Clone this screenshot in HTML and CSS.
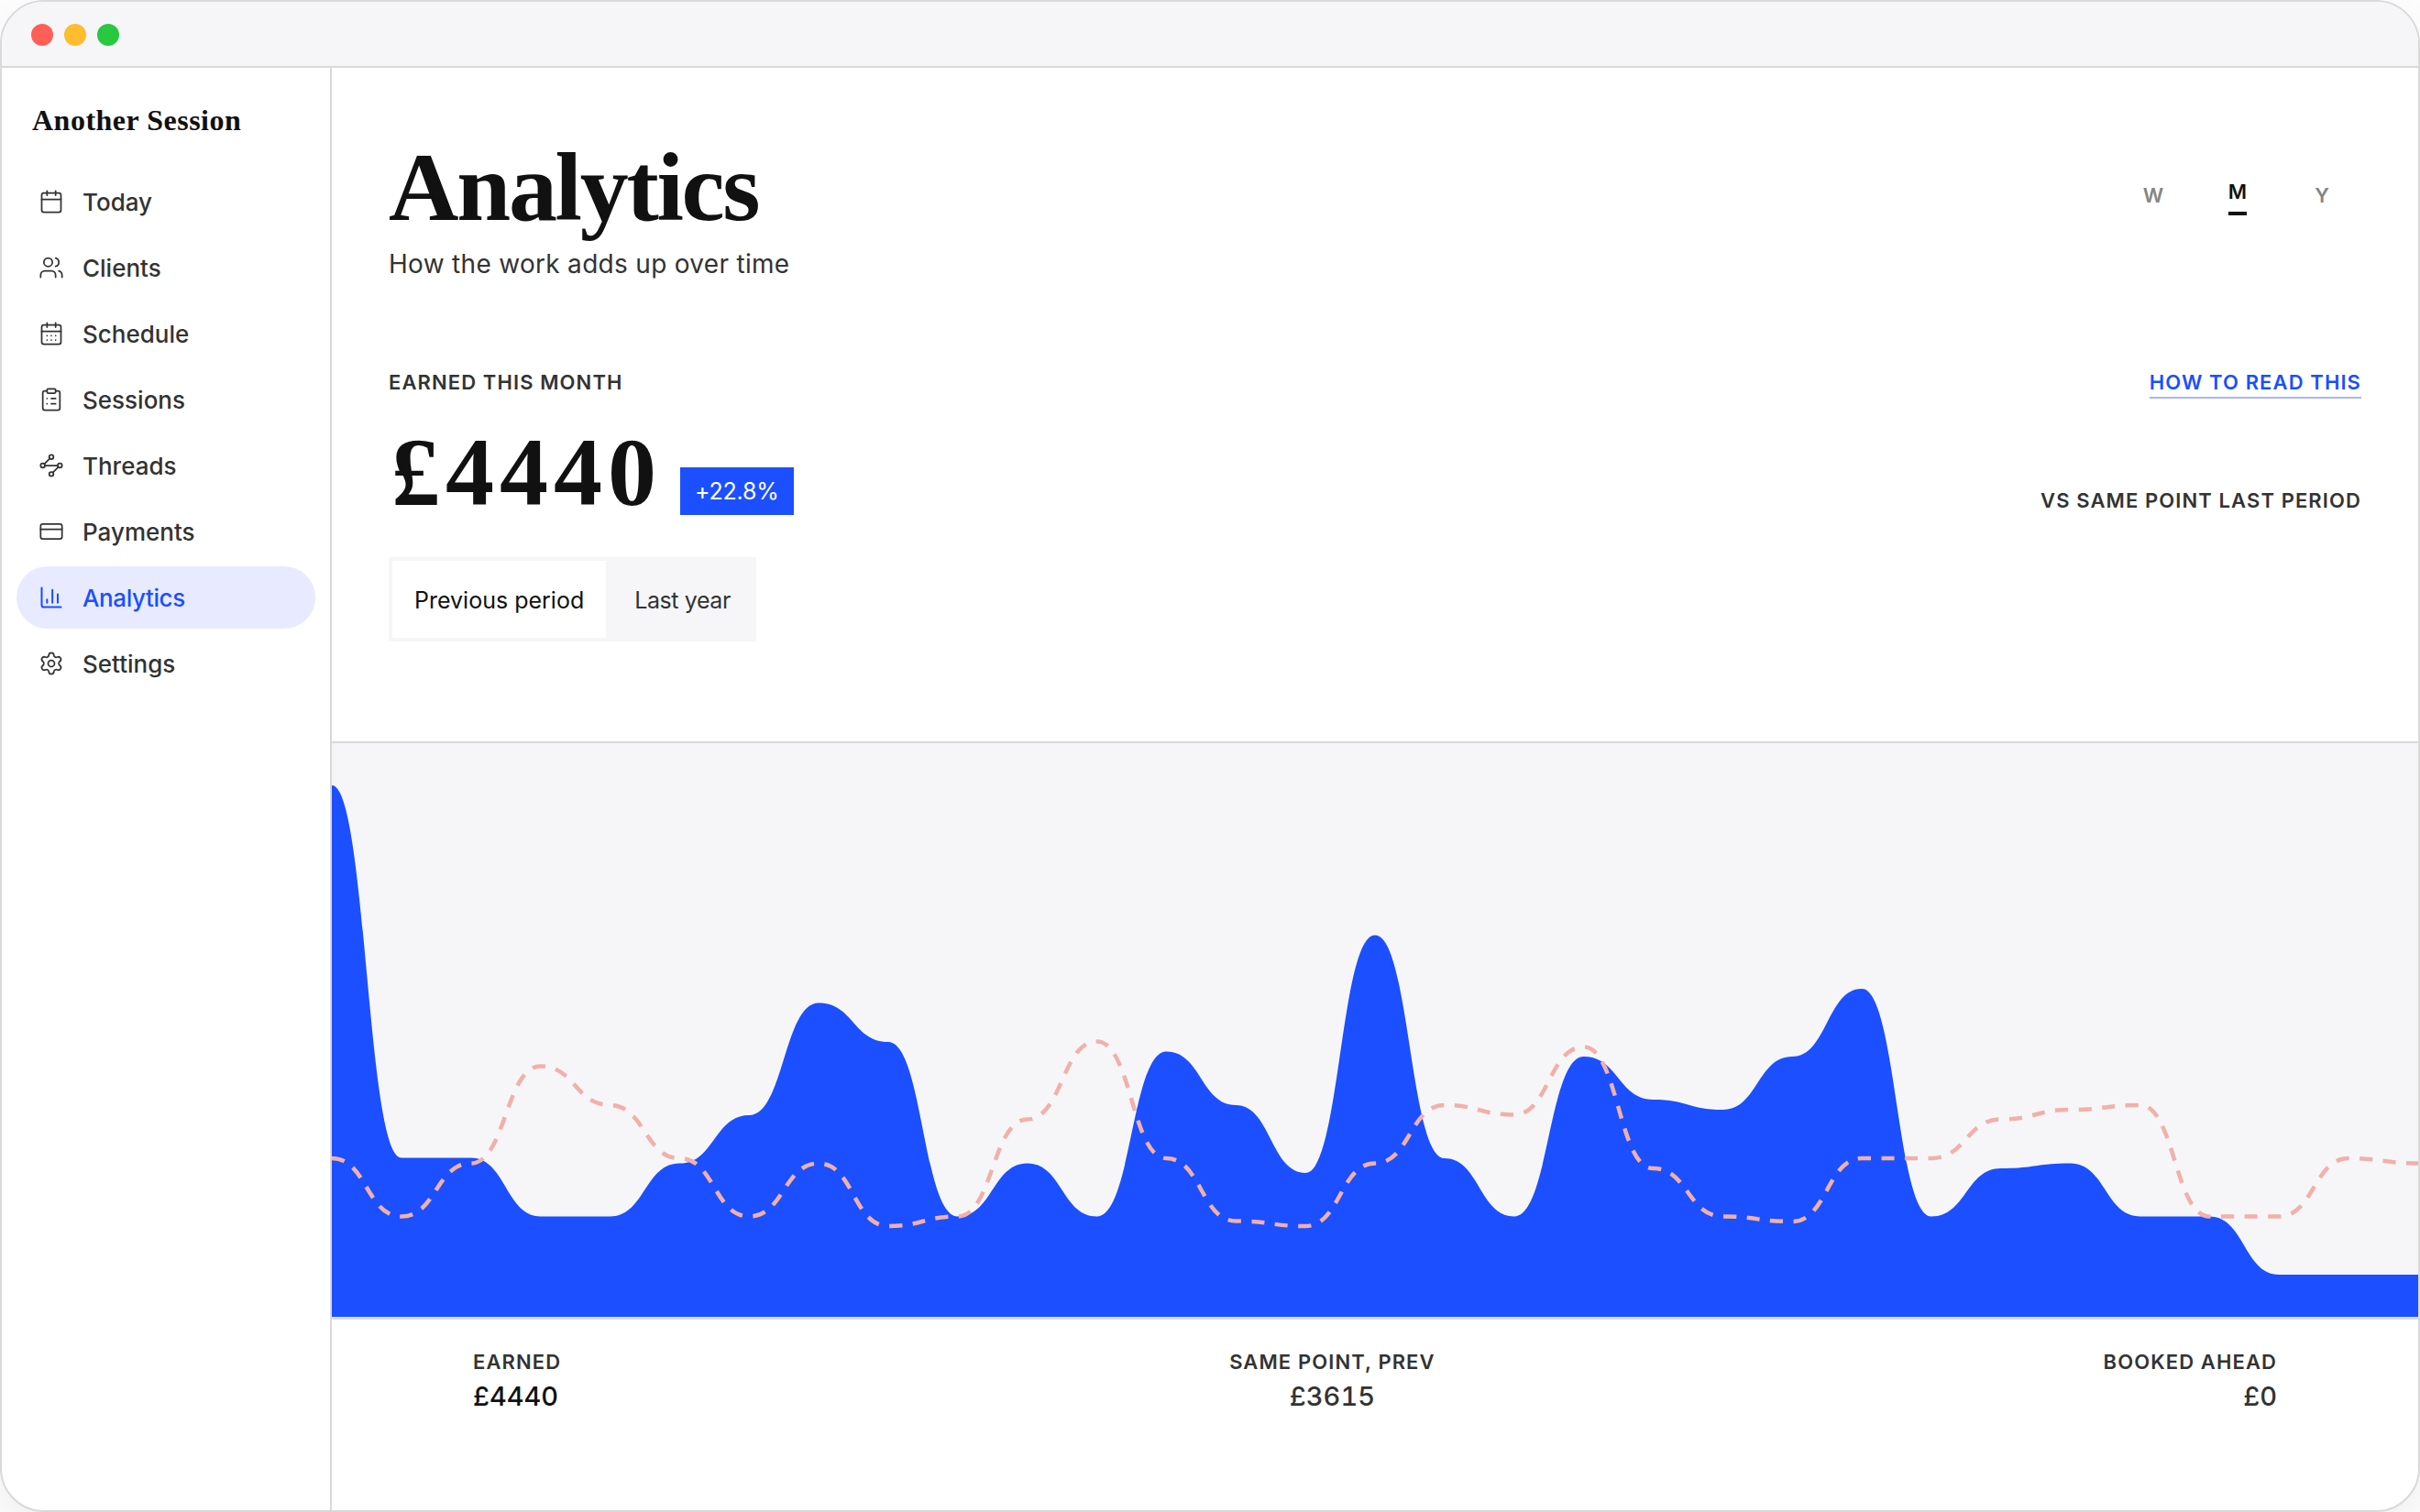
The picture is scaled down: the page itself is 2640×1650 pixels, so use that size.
FILE: index.html
```html
<!DOCTYPE html>
<html lang="en">
<head>
  <meta charset="UTF-8">
  <meta name="viewport" content="width=device-width, initial-scale=1.0">
  <title>Another Session - Analytics</title>
  <link rel="stylesheet" href="styles.css">
</head>
<body>
  <div class="window">
    <div class="titlebar">
      <span class="dot red"></span>
      <span class="dot yellow"></span>
      <span class="dot green"></span>
    </div>

    <div class="app">
      <aside class="sidebar">
        <div class="brand">Another Session</div>
        <nav class="nav">
          <a class="nav-item">
            <svg class="icon" viewBox="0 0 24 24"><path d="M8 2v4M16 2v4M3 10h18"/><rect x="3" y="4" width="18" height="18" rx="2"/></svg>
            <span>Today</span>
          </a>
          <a class="nav-item">
            <svg class="icon" viewBox="0 0 24 24"><path d="M16 21v-2a4 4 0 0 0-4-4H6a4 4 0 0 0-4 4v2"/><circle cx="9" cy="7" r="4"/><path d="M22 21v-2a4 4 0 0 0-3-3.87M16 3.13a4 4 0 0 1 0 7.75"/></svg>
            <span>Clients</span>
          </a>
          <a class="nav-item">
            <svg class="icon" viewBox="0 0 24 24"><path d="M8 2v4M16 2v4M3 10h18"/><rect x="3" y="4" width="18" height="18" rx="2"/><path d="M8 14h.01M12 14h.01M16 14h.01M8 18h.01M12 18h.01M16 18h.01"/></svg>
            <span>Schedule</span>
          </a>
          <a class="nav-item">
            <svg class="icon" viewBox="0 0 24 24"><rect x="8" y="2" width="8" height="4" rx="1"/><path d="M16 4h2a2 2 0 0 1 2 2v14a2 2 0 0 1-2 2H6a2 2 0 0 1-2-2V6a2 2 0 0 1 2-2h2M12 11h4M12 16h4M8 11h.01M8 16h.01"/></svg>
            <span>Sessions</span>
          </a>
          <a class="nav-item">
            <svg class="icon" viewBox="0 0 24 24"><path d="m10.586 5.414-5.172 5.172M18.586 13.414l-5.172 5.172M6 12h12"/><circle cx="12" cy="20" r="2"/><circle cx="12" cy="4" r="2"/><circle cx="20" cy="12" r="2"/><circle cx="4" cy="12" r="2"/></svg>
            <span>Threads</span>
          </a>
          <a class="nav-item">
            <svg class="icon" viewBox="0 0 24 24"><rect x="2" y="5" width="20" height="14" rx="2"/><path d="M2 10h20"/></svg>
            <span>Payments</span>
          </a>
          <a class="nav-item active">
            <svg class="icon" viewBox="0 0 24 24"><path d="M3 3v16a2 2 0 0 0 2 2h16M18 17V9M13 17V5M8 17v-3"/></svg>
            <span>Analytics</span>
          </a>
          <a class="nav-item">
            <svg class="icon" viewBox="0 0 24 24"><path d="M9.671 4.136a2.34 2.34 0 0 1 4.659 0 2.34 2.34 0 0 0 3.319 1.915 2.34 2.34 0 0 1 2.33 4.033 2.34 2.34 0 0 0 0 3.831 2.34 2.34 0 0 1-2.33 4.033 2.34 2.34 0 0 0-3.319 1.915 2.34 2.34 0 0 1-4.659 0 2.34 2.34 0 0 0-3.32-1.915 2.34 2.34 0 0 1-2.33-4.033 2.34 2.34 0 0 0 0-3.831A2.34 2.34 0 0 1 6.35 6.051a2.34 2.34 0 0 0 3.319-1.915"/><circle cx="12" cy="12" r="3"/></svg>
            <span>Settings</span>
          </a>
        </nav>
      </aside>

      <main class="main">
        <section class="hero">
          <header class="page-header">
            <div>
              <h1>Analytics</h1>
              <p class="subtitle">How the work adds up over time</p>
            </div>
            <div class="range">
              <button>W</button>
              <button class="active"><span>M</span></button>
              <button>Y</button>
            </div>
          </header>

          <div class="row label-row">
            <span class="label">Earned this month</span>
            <a class="label help">How to read this</a>
          </div>

          <div class="row amount-row">
            <div class="amount">
              <span class="figure">£4440</span>
              <span class="badge">+22.8%</span>
            </div>
            <span class="label versus">vs same point last period</span>
          </div>

          <div class="toggle">
            <button class="active">Previous period</button>
            <button>Last year</button>
          </div>
        </section>

        <section class="chart">
          <svg width="2276" height="626" viewBox="0 0 2276 626">
            <path class="area" id="area"/>
            <path class="previous" id="previous"/>
          </svg>
        </section>

        <section class="totals">
          <div class="total">
            <span class="label">Earned</span>
            <span class="value strong">£4440</span>
          </div>
          <div class="total center">
            <span class="label">Same point, prev</span>
            <span class="value">£3615</span>
          </div>
          <div class="total right">
            <span class="label">Booked ahead</span>
            <span class="value">£0</span>
          </div>
        </section>
      </main>
    </div>
  </div>
  <script src="chart.js"></script>
</body>
</html>
```
FILE: styles.css
```css
* {
  box-sizing: border-box;
}

body {
  margin: 0;
  background: #fdfdfd;
  color: #333333;
  font-family: Inter, "Liberation Sans", sans-serif;
}

button {
  padding: 0;
  border: none;
  background: none;
  font: inherit;
  color: inherit;
}

.window {
  display: flex;
  flex-direction: column;
  width: 2640px;
  height: 1650px;
  border: 2px solid #d9d9d9;
  border-radius: 48px;
  background: #ffffff;
  box-shadow: 0 16px 40px rgba(0, 0, 0, 0.06);
  overflow: hidden;
}

.titlebar {
  display: flex;
  align-items: center;
  gap: 12px;
  height: 72px;
  padding: 2px 0 0 32px;
  background: #f6f6f9;
  border-bottom: 2px solid #d9d9d9;
}

.dot {
  width: 24px;
  height: 24px;
  border-radius: 50%;
}

.red { background: #ff5f57; }
.yellow { background: #febc2e; }
.green { background: #28c840; }

.app {
  display: flex;
  flex: 1;
}

/* Sidebar */
.sidebar {
  width: 360px;
  padding: 37px 16px 0;
  border-right: 2px solid #d9d9d9;
}

.brand {
  height: 75px;
  padding-left: 17px;
  font: bold 32px/40px "Liberation Serif", serif;
  letter-spacing: 0.5px;
  color: #111111;
}

.nav {
  display: flex;
  flex-direction: column;
  gap: 4px;
}

.nav-item {
  display: flex;
  align-items: center;
  gap: 20px;
  height: 68px;
  padding-left: 24px;
  border-radius: 34px;
  font-size: 26px;
  font-weight: 500;
}

.nav-item.active {
  background: #e8eaff;
  color: #1b4fff;
  letter-spacing: -0.4px;
}

.icon {
  width: 28px;
  height: 28px;
  fill: none;
  stroke: currentColor;
  stroke-width: 1.5;
  stroke-linecap: round;
  stroke-linejoin: round;
}

.active .icon {
  stroke-width: 1.75;
}

/* Main column */
.main {
  flex: 1;
}

.hero {
  height: 735px;
  padding: 78px 62px 0;
}

.page-header,
.row {
  display: flex;
  justify-content: space-between;
}

h1 {
  margin: 0;
  font: bold 106px/106px "Liberation Serif", serif;
  letter-spacing: -2.3px;
  color: #111111;
}

.subtitle {
  margin: 10px 0 0;
  font-size: 28px;
  line-height: 40px;
  letter-spacing: 0.3px;
}

.range {
  display: flex;
  height: 122px;
  margin-right: -3px;
  font-size: 22px;
  font-weight: 600;
  color: #858585;
}

.range button {
  width: 92px;
  line-height: 28px;
}

.range .active {
  color: #111111;
}

.range .active span {
  display: inline-block;
  margin-top: 4px;
  padding-bottom: 8px;
  border-bottom: 4px solid #111111;
}

.label {
  font-size: 22px;
  font-weight: 600;
  line-height: 28px;
  letter-spacing: 1.1px;
  text-transform: uppercase;
}

.label-row {
  margin-top: 95px;
}

.help {
  height: 32px;
  color: #1b4fff;
  border-bottom: 2px solid #a8b6f2;
}

.amount-row {
  align-items: flex-end;
  margin-top: 28px;
}

.amount {
  display: flex;
  align-items: flex-end;
}

.figure {
  padding-left: 3px;
  font: bold 106px/106px "Liberation Serif", serif;
  letter-spacing: 6px;
  color: #111111;
}

.badge {
  height: 52px;
  margin: 0 0 7px 20px;
  padding: 0 16px;
  background: #1b4fff;
  color: #ffffff;
  font-size: 25px;
  line-height: 52px;
  letter-spacing: -0.2px;
}

.versus {
  margin-bottom: 9px;
}

.toggle {
  display: inline-flex;
  gap: 7px;
  height: 92px;
  margin-top: 39px;
  padding: 4px;
  background: #f6f6f9;
  font-size: 25px;
}

.toggle button {
  padding: 2px 24px 0;
  letter-spacing: -0.4px;
}

.toggle .active {
  background: #ffffff;
  color: #111111;
  letter-spacing: 0;
}

/* Chart */
.chart {
  height: 631px;
  background: #f6f6f9;
  border-top: 2px solid #d9d9d9;
  border-bottom: 3px solid #d8dbe9;
}

.chart svg {
  display: block;
}

.area {
  fill: #1b4fff;
}

.previous {
  fill: none;
  stroke: #f2b0a8;
  stroke-width: 4.5;
  stroke-dasharray: 14.2 11.42;
}

/* Totals */
.totals {
  display: flex;
  justify-content: space-between;
  padding: 32px 154px 0;
}

.total {
  display: flex;
  flex-direction: column;
}

.center { align-items: center; }
.right { align-items: flex-end; }

.value {
  margin-top: 4px;
  font-size: 29px;
  font-weight: 500;
  line-height: 40px;
  font-variant-numeric: tabular-nums;
}

.strong {
  color: #111111;
}
```
FILE: chart.js
```js
// Daily levels, in pixels down from the top of the plot
const current = [46, 452.5, 452.5, 516.5, 516.5, 458.5, 406, 283.5, 326, 516.5, 458.5, 516.5, 336.5, 395, 469, 209.5,
  453, 516.5, 342, 389, 400, 342, 268, 516.5, 464, 458.5, 516.5, 516.5, 580, 580, 580];
const previous = [453, 516.5, 458.5, 352.5, 395, 453, 516.5, 458.5, 527, 516.5, 410.5, 325.5, 453, 521.5, 527, 458.5,
  395, 405.5, 331.5, 464, 516.5, 522, 453, 453, 410.5, 400, 395, 516.5, 516.5, 453, 458.5];

const width = 2276;
const height = 626;
const step = width / (current.length - 1);

function curve(points) {
  let d = `M0 ${points[0]}`;
  for (let i = 1; i < points.length; i++) {
    const mid = (i - 0.5) * step;
    d += ` C${mid} ${points[i - 1]} ${mid} ${points[i]} ${i * step} ${points[i]}`;
  }
  return d;
}

document.getElementById('area').setAttribute('d', `${curve(current)} V${height} H0 Z`);
document.getElementById('previous').setAttribute('d', curve(previous));
```
